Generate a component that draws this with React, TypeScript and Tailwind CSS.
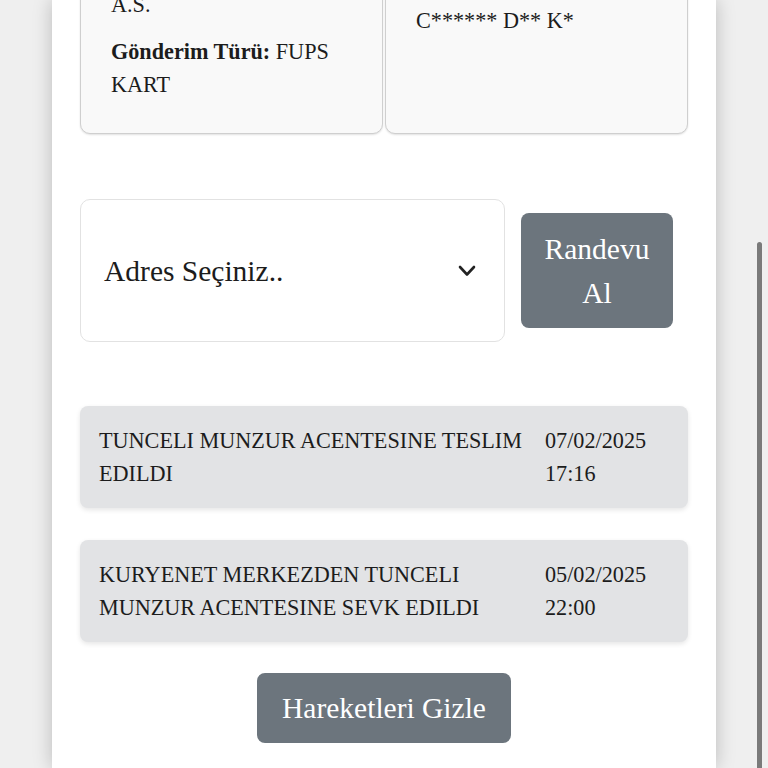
import React from 'react';

const events = [
  { text: 'TUNCELI MUNZUR ACENTESINE TESLIM EDILDI', date: '07/02/2025 17:16' },
  { text: 'KURYENET MERKEZDEN TUNCELI MUNZUR ACENTESINE SEVK EDILDI', date: '05/02/2025 22:00' },
];

export default function App() {
  return (
    <div className="relative h-[768px] overflow-hidden bg-[#efefef] font-['Liberation_Serif','Times_New_Roman',serif] text-[#1c1c1c]">
      <div className="mx-auto flow-root h-full w-[664px] bg-white px-[28px] shadow-[0_0_18px_rgba(0,0,0,0.22)]">
        <div className="-mt-[40px] grid grid-cols-2 gap-[2px] text-[22.2px] leading-[33px]">
          <div className="rounded-[10px] border border-[#cfcfcf] bg-[#f9f9f9] px-[30px] pt-[27px] pb-[32px] shadow-[0_1px_2px_rgba(0,0,0,0.12)]">
            <p>A.S.</p>
            <p className="mt-[14px]">
              <b>Gönderim Türü:</b> FUPS KART
            </p>
          </div>
          <div className="rounded-[10px] border border-[#cfcfcf] bg-[#f9f9f9] px-[30px] pt-[43px] pb-[32px] shadow-[0_1px_2px_rgba(0,0,0,0.12)]">
            <p>C****** D** K*</p>
          </div>
        </div>

        <div className="mt-[65px] flex items-center gap-4">
          <div className="flex h-[143px] w-[425px] items-center justify-between rounded-[10px] border border-[#e2e2e2] bg-white pl-[23px] pr-[28px] text-[29.5px] leading-[44px]">
            <span>Adres Seçiniz..</span>
            <svg width="18" height="12" viewBox="0 0 18 12" fill="none">
              <polyline points="2,2 9,9.5 16,2" stroke="#222" strokeWidth="2.6" strokeLinecap="round" strokeLinejoin="round" />
            </svg>
          </div>
          <button className="h-[115px] w-[152px] rounded-[8px] bg-[#6c757d] px-[20px] text-[29.5px] leading-[44px] text-white">
            Randevu Al
          </button>
        </div>

        <div className="mt-[64px] flex flex-col gap-[32px] text-[22.2px] leading-[33px]">
          {events.map(e => (
            <div
              key={e.date}
              className="flex rounded-[8px] bg-[#e2e3e5] px-[19px] py-[18px] shadow-[0_2px_5px_rgba(0,0,0,0.1)]"
            >
              <div className="flex-1">{e.text}</div>
              <div className="ml-4 w-[124px]">{e.date}</div>
            </div>
          ))}
        </div>

        <div className="mt-[31px] flex justify-center">
          <button className="h-[70px] rounded-[8px] bg-[#6c757d] px-[25px] text-[29.5px] leading-[44px] text-white">
            Hareketleri Gizle
          </button>
        </div>
      </div>

      <div className="absolute bottom-0 right-[6px] top-[242px] w-[5px] rounded-t-full bg-[#7a7a7a]" />
    </div>
  );
}
